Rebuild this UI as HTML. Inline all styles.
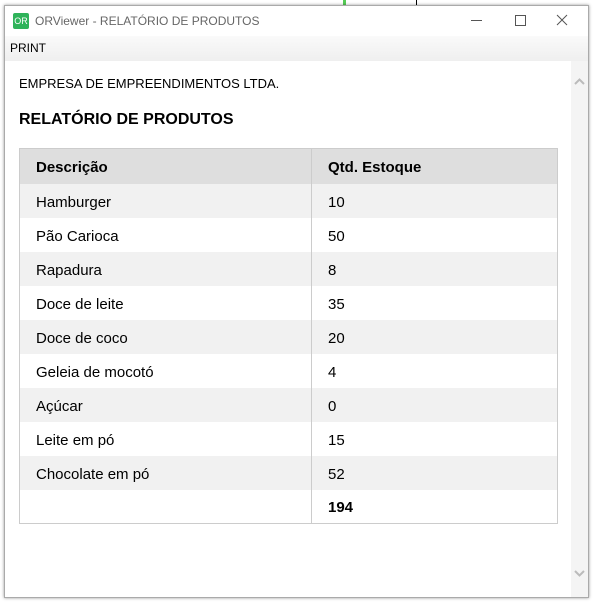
<!DOCTYPE html>
<html><head><style>
body{margin:0;width:595px;height:604px;background:#fff;position:relative;overflow:hidden;font-family:"Liberation Sans",sans-serif}
.win{position:absolute;left:4px;top:5px;width:585px;height:593px;background:#fff;box-shadow:0 0 3px rgba(0,0,0,.4);border:1px solid #aaa;box-sizing:border-box}
.title{position:absolute;left:0;top:0;width:100%;height:30px;background:#fff}
.logo{position:absolute;left:8px;top:7px;width:16px;height:16px;background:#2fb35a;color:#fff;font-size:9px;line-height:16px;text-align:center;border-radius:2px}
.ttext{position:absolute;left:30px;top:8px;font-size:12px;color:#666}
.menu{position:absolute;left:0;top:30px;width:100%;height:25px;background:linear-gradient(#fafafa,#efefef)}
.menu span{position:absolute;left:5px;top:5px;font-size:12px;color:#000}
.sb{position:absolute;right:0;top:55px;width:17px;bottom:0;background:#f4f4f4}
.c{position:absolute;font-size:13px;color:#000}
table{position:absolute;left:14px;top:142px;width:539px;border-collapse:collapse;border:1px solid #ccc;font-size:15px}
td{height:34px;padding:3px 0 0 16px;box-sizing:border-box}
td:first-child{width:292px;border-right:1px solid #ccc}
tr:nth-child(even){background:#f1f1f1}
tr.h{background:#dedede;font-weight:bold;height:35px}
</style></head><body>
<div style="position:absolute;left:343px;top:0;width:3px;height:6px;background:#5c5"></div>
<div style="position:absolute;left:416px;top:0;width:1px;height:6px;background:#000"></div>
<div class="win">
<div class="title"><div class="logo">OR</div><div class="ttext">ORViewer - RELATÓRIO DE PRODUTOS</div>
<div style="position:absolute;left:466px;top:14px;width:11px;height:1px;background:#555"></div>
<div style="position:absolute;left:510px;top:9px;width:9px;height:9px;border:1px solid #555"></div>
<svg style="position:absolute;left:551px;top:8px" width="12" height="12"><path d="M1 1L11 11M11 1L1 11" stroke="#555" stroke-width="1"/></svg>
</div>
<div class="menu"><span>PRINT</span></div>
<div class="sb"><svg style="position:absolute;left:3px;top:17px" width="11" height="7"><path d="M1 6L5.5 1.5L10 6" stroke="#bbb" stroke-width="2" fill="none"/></svg><svg style="position:absolute;left:3px;bottom:20px" width="11" height="7"><path d="M1 1L5.5 5.5L10 1" stroke="#bbb" stroke-width="2" fill="none"/></svg></div>
<div class="c" style="left:14px;top:70px">EMPRESA DE EMPREENDIMENTOS LTDA.</div>
<div class="c" style="left:14px;top:105px;font-size:16px;font-weight:bold">RELATÓRIO DE PRODUTOS</div>
<table>
<tr class="h"><td>Descrição</td><td>Qtd. Estoque</td></tr>
<tr><td>Hamburger</td><td>10</td></tr>
<tr><td>Pão Carioca</td><td>50</td></tr>
<tr><td>Rapadura</td><td>8</td></tr>
<tr><td>Doce de leite</td><td>35</td></tr>
<tr><td>Doce de coco</td><td>20</td></tr>
<tr><td>Geleia de mocotó</td><td>4</td></tr>
<tr><td>Açúcar</td><td>0</td></tr>
<tr><td>Leite em pó</td><td>15</td></tr>
<tr><td>Chocolate em pó</td><td>52</td></tr>
<tr style="background:#fff"><td></td><td><b>194</b></td></tr>
</table>
</div>
</body></html>
